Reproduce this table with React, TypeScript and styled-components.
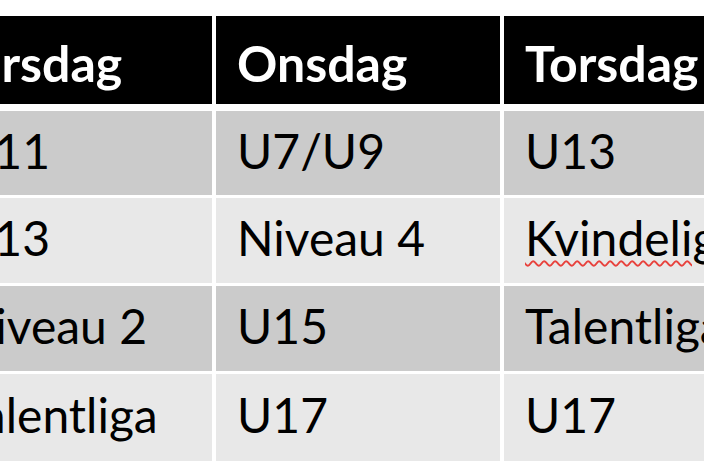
import React from 'react'
import styled, { createGlobalStyle } from 'styled-components'

const GlobalStyle = createGlobalStyle`
  html, body {
    margin: 0;
    padding: 0;
    background: #ffffff;
  }
  body {
    width: 704px;
    height: 470px;
    overflow: hidden;
  }
`

const Viewport = styled.div`
  width: 704px;
  height: 470px;
  overflow: hidden;
  background: #ffffff;
  padding-top: 16px;
  box-sizing: border-box;
`

const Grid = styled.div`
  display: grid;
  grid-template-columns: 274px 284px 284px;
  grid-template-rows: 92px 84px 85px 85px 87px;
  column-gap: 4px;
  row-gap: 3px;
  margin-left: -62px;
  width: max-content;
  font-family: Lato, 'Liberation Sans', sans-serif;
`

const Cell = styled.div<{ $tone: 'head' | 'dark' | 'light' }>`
  display: flex;
  align-items: center;
  padding: ${(p) => (p.$tone === 'head' ? '6px 0 0 21px' : '0 0 6px 21px')};
  box-sizing: border-box;
  white-space: nowrap;
  overflow: hidden;
  font-size: ${(p) => (p.$tone === 'head' ? '50px' : '48px')};
  font-weight: ${(p) => (p.$tone === 'head' ? 700 : 400)};
  color: ${(p) => (p.$tone === 'head' ? '#ffffff' : '#000000')};
  background: ${(p) =>
    p.$tone === 'head' ? '#000000' : p.$tone === 'dark' ? '#cbcbcb' : '#e8e8e8'};
  margin-bottom: ${(p) => (p.$tone === 'head' ? '4px' : '0')};
`

const Misspelled = styled.span`
  text-decoration: underline wavy #e8413c;
  text-decoration-thickness: 1.5px;
  text-underline-offset: 4px;
`

const header = ['Tirsdag', 'Onsdag', 'Torsdag']

const rows = [
  ['U11', 'U7/U9', 'U13'],
  ['U13', 'Niveau 4', 'Kvindeliga'],
  ['Niveau 2', 'U15', 'Talentliga'],
  ['Talentliga', 'U17', 'U17'],
]

const flagged = new Set(['Kvindeliga'])

export default function App() {
  return (
    <>
      <GlobalStyle />
      <Viewport>
        <Grid>
          {header.map((h) => (
            <Cell key={h} $tone="head">
              {h}
            </Cell>
          ))}
          {rows.map((row, i) =>
            row.map((text, j) => (
              <Cell key={`${i}-${j}`} $tone={i % 2 === 0 ? 'dark' : 'light'}>
                {flagged.has(text) ? <Misspelled>{text}</Misspelled> : text}
              </Cell>
            )),
          )}
        </Grid>
      </Viewport>
    </>
  )
}
